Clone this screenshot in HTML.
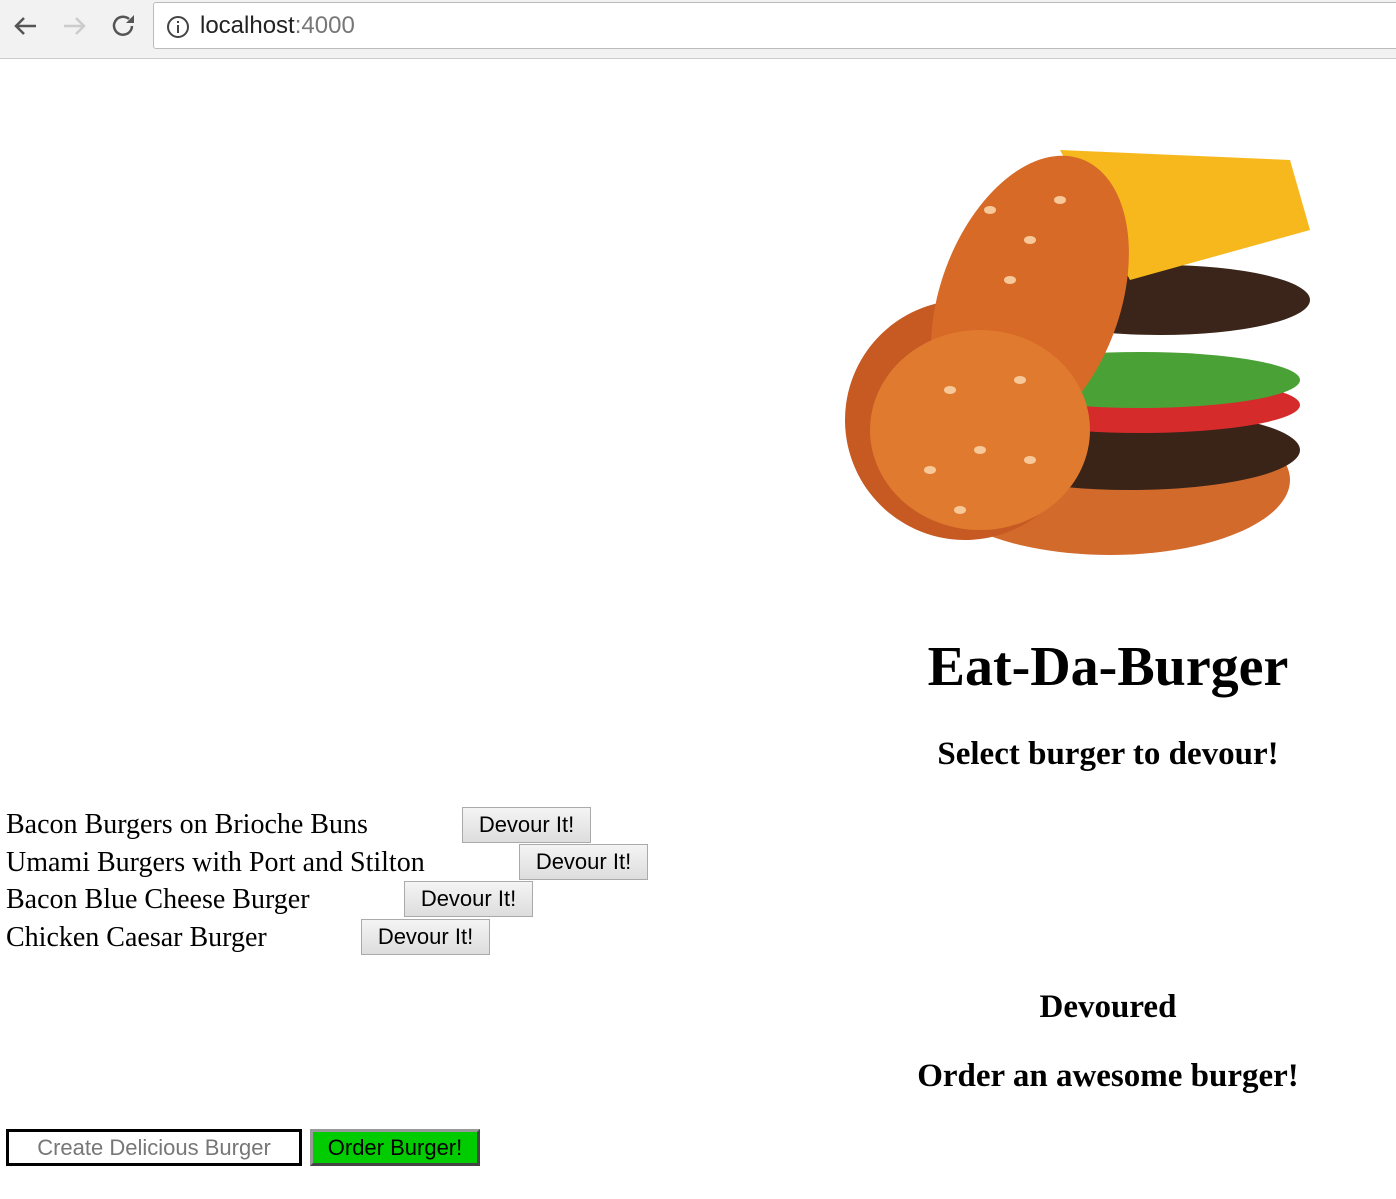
<!DOCTYPE html>
<html><head><style>
body{margin:0;width:1396px;height:1199px;position:relative;background:#fff;font-family:"Liberation Serif",serif;overflow:hidden}
.a{position:absolute;white-space:nowrap}
.bar{position:absolute;left:0;top:0;width:1396px;height:58px;background:#f2f2f2;border-bottom:1px solid #ccc}
.url{position:absolute;left:153px;top:2px;width:1250px;height:45px;background:#fff;border:1px solid #bbb;border-radius:3px}
.it{font-size:28px;color:#000}
.btn{position:absolute;height:34px;width:127px;border:1px solid #aaa;background:linear-gradient(#f4f4f4,#ddd);font-family:"Liberation Sans",sans-serif;font-size:22px;line-height:34px;text-align:center;color:#000}
</style></head><body>
<div class="bar">
<svg class="a" style="left:10px;top:12px" width="130" height="30" viewBox="0 0 130 30">
<path d="M26 14H6M14 6l-8 8 8 8" stroke="#555" stroke-width="2.5" fill="none"/>
<path d="M54 14h20M66 6l8 8-8 8" stroke="#ccc" stroke-width="2.5" fill="none"/>
<path d="M122 14a9 9 0 1 1-3-7" stroke="#555" stroke-width="2.5" fill="none"/><path d="M124 3v8h-8z" fill="#555"/>
</svg>
<div class="url"><svg class="a" style="left:12px;top:12px" width="24" height="24"><circle cx="12" cy="12" r="10" stroke="#444" stroke-width="2" fill="none"/><rect x="11" y="10" width="2" height="8" fill="#444"/><rect x="11" y="6" width="2" height="2" fill="#444"/></svg>
<div class="a" style="left:46px;top:9px;font-family:'Liberation Sans',sans-serif;font-size:24px;color:#222">localhost<span style="color:#777">:4000</span></div></div>
</div>
<svg class="a" style="left:830px;top:130px" width="500" height="430" viewBox="0 0 500 430">
<ellipse cx="280" cy="350" rx="180" ry="75" fill="#d26a2c"/>
<ellipse cx="300" cy="320" rx="170" ry="40" fill="#3a2418"/>
<ellipse cx="310" cy="275" rx="160" ry="28" fill="#d62b2b"/>
<ellipse cx="310" cy="250" rx="160" ry="28" fill="#4aa236"/>
<ellipse cx="330" cy="170" rx="150" ry="35" fill="#3b2419"/>
<path d="M230 20 L460 30 L480 100 L300 150 Z" fill="#f7b81e"/>
<ellipse cx="135" cy="290" rx="120" ry="120" fill="#c65a22" transform="rotate(30 135 290)"/>
<ellipse cx="200" cy="170" rx="90" ry="150" fill="#d86a28" transform="rotate(20 200 170)"/>
<ellipse cx="150" cy="300" rx="110" ry="100" fill="#e07a2e"/>
<g fill="#f6c89a"><ellipse cx="160" cy="80" rx="6" ry="4"/><ellipse cx="200" cy="110" rx="6" ry="4"/><ellipse cx="230" cy="70" rx="6" ry="4"/><ellipse cx="180" cy="150" rx="6" ry="4"/><ellipse cx="120" cy="260" rx="6" ry="4"/><ellipse cx="150" cy="320" rx="6" ry="4"/><ellipse cx="190" cy="250" rx="6" ry="4"/><ellipse cx="100" cy="340" rx="6" ry="4"/><ellipse cx="200" cy="330" rx="6" ry="4"/><ellipse cx="130" cy="380" rx="6" ry="4"/></g>
</svg>
<div class="a" style="left:1108px;top:635px;transform:translateX(-50%);font-size:56px;font-weight:bold">Eat-Da-Burger</div>
<div class="a" style="left:1108px;top:736px;transform:translateX(-50%);font-size:33px;font-weight:bold">Select burger to devour!</div>
<div class="a it" style="left:6px;top:809px">Bacon Burgers on Brioche Buns</div>
<div class="btn" style="left:462px;top:807px">Devour It!</div>
<div class="a it" style="left:6px;top:847px">Umami Burgers with Port and Stilton</div>
<div class="btn" style="left:519px;top:844px">Devour It!</div>
<div class="a it" style="left:6px;top:884px">Bacon Blue Cheese Burger</div>
<div class="btn" style="left:404px;top:881px">Devour It!</div>
<div class="a it" style="left:6px;top:922px">Chicken Caesar Burger</div>
<div class="btn" style="left:361px;top:919px">Devour It!</div>
<div class="a" style="left:1108px;top:989px;transform:translateX(-50%);font-size:33px;font-weight:bold">Devoured</div>
<div class="a" style="left:1108px;top:1058px;transform:translateX(-50%);font-size:33px;font-weight:bold">Order an awesome burger!</div>
<div class="a" style="left:6px;top:1129px;width:290px;height:31px;border:3px solid #000;font-family:'Liberation Sans',sans-serif;font-size:22px;color:#777;text-align:center;line-height:31px">Create Delicious Burger</div>
<div class="a" style="left:310px;top:1129px;width:164px;height:31px;border:3px outset #999;background:#00cc00;font-family:'Liberation Sans',sans-serif;font-size:22px;color:#000;text-align:center;line-height:31px">Order Burger!</div>
</body></html>
